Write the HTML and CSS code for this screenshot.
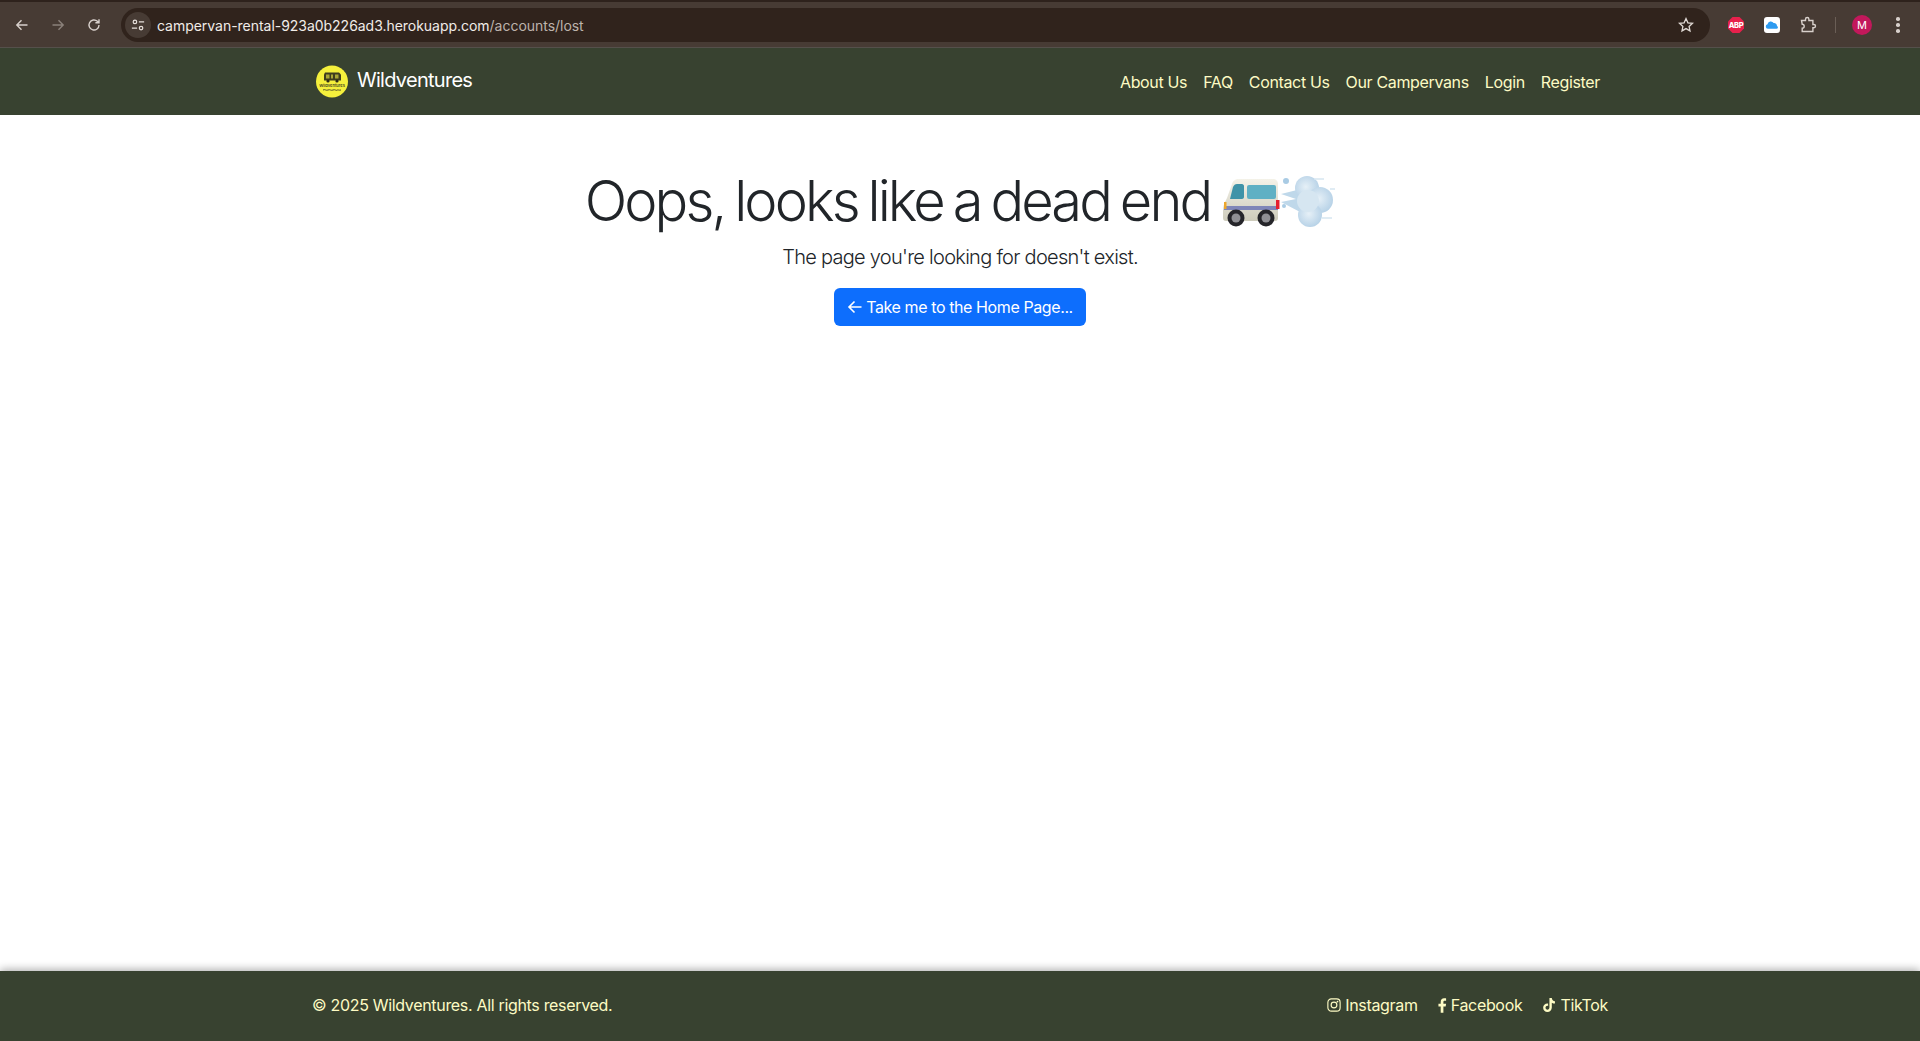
FILE: index.html
```html
<!DOCTYPE html>
<html lang="en">
<head>
    <meta charset="UTF-8">
    <meta name="viewport" content="width=device-width, initial-scale=1.0">
    <title>Wildventures - Page not found</title>
    <link rel="stylesheet" href="styles.css">
</head>
<body>
    <!-- browser chrome -->
    <div class="browser-bar">
        <div class="nav-icons">
            <svg class="tool-icon" viewBox="0 0 16 16"><path d="M13.5 8H3M7.5 3.2 2.800 8l4.700 4.800"/></svg>
            <svg class="tool-icon dim" viewBox="0 0 16 16"><path d="M2.500 8H13M8.500 3.200 13.200 8l-4.700 4.800"/></svg>
            <svg class="tool-icon" viewBox="0 0 16 16"><path d="M13 8a5 5 0 1 1-1.600-3.700L13 5.800M13 2.200v3.600H9.400"/></svg>
        </div>
        <div class="omnibox">
            <span class="site-info">
                <svg viewBox="0 0 16 16"><circle cx="4.500" cy="4.500" r="2"/><path d="M9 4.500h6M1 11.500h6"/><circle cx="11.500" cy="11.500" r="2"/></svg>
            </span>
            <span class="url">campervan-rental-923a0b226ad3.herokuapp.com<span class="url-path">/accounts/lost</span></span>
            <svg class="star" viewBox="0 0 16 16"><path d="m8 1.600 1.900 4.200 4.600.5-3.400 3.100.9 4.500-4-2.300-4 2.300.9-4.500L1.500 6.300l4.600-.5z"/></svg>
        </div>
        <div class="ext-icons">
            <svg class="ext" viewBox="0 0 18 18"><path class="abp-shape" d="M5.500 1h7L17 5.500v7L12.500 17h-7L1 12.500v-7z"/><text x="9" y="11.800" class="abp-text">ABP</text></svg>
            <svg class="ext" viewBox="0 0 18 18"><rect x="1" y="1" width="16" height="16" rx="3" class="cloud-bg"/><path class="cloud" d="M4.800 12.800a2.300 2.300 0 0 1-.3-4.500 3.300 3.300 0 0 1 6.100-1.300 2.900 2.900 0 0 1 3.400 2.900 1.500 1.500 0 0 1-.5 2.900z"/></svg>
            <svg class="tool-icon puzzle" viewBox="0 0 18 18"><path d="M2.500 4.500h4V3.200a1.700 1.700 0 0 1 3.400 0v1.300h4v4h1a1.600 1.600 0 0 1 0 3.200h-1v3.800H3.200v-3.300a2 2 0 0 0 0-4z"/></svg>
            <span class="divider"></span>
            <span class="avatar">M</span>
            <span class="kebab"><i></i><i></i><i></i></span>
        </div>
    </div>

    <nav class="navbar">
        <div class="container nav-inner">
            <a class="brand" href="#">
                <svg class="logo" viewBox="0 0 32 32">
                    <circle cx="16" cy="16" r="16" fill="#f5f03c"/>
                    <path d="M8 15V9l1-2h14l2 2v6z" fill="#3f3d1e"/>
                    <rect x="10" y="9" width="3.500" height="4" fill="#a9a635"/>
                    <rect x="15" y="9" width="2" height="4" fill="#a9a635"/>
                    <rect x="19" y="9" width="3.500" height="4" fill="#a9a635"/>
                    <circle cx="12" cy="15.500" r="1.600" fill="#2c2b16"/>
                    <circle cx="21" cy="15.500" r="1.600" fill="#2c2b16"/>
                    <text x="16" y="21" class="logo-text">Wildventures</text>
                    <path d="M7 24.500c2-1.200 3 1 5 0s3 1 5 0 3 1 4 .2 2 .4 4-.2" fill="none" stroke="#55532a" stroke-width="1"/>
                </svg>
                <span>Wildventures</span>
            </a>
            <ul class="nav-links">
                <li><a href="#">About Us</a></li>
                <li><a href="#">FAQ</a></li>
                <li><a href="#">Contact Us</a></li>
                <li><a href="#">Our Campervans</a></li>
                <li><a href="#">Login</a></li>
                <li><a href="#">Register</a></li>
            </ul>
        </div>
    </nav>

    <main class="content">
        <h1 class="lost-title">Oops, looks like a dead end
            <svg class="emoji" viewBox="0 0 113 56">
                <defs>
                    <radialGradient id="puff" cx="45%" cy="45%" r="60%">
                        <stop offset="0" stop-color="#e6f0f7"/>
                        <stop offset="1" stop-color="#b4d0e6"/>
                    </radialGradient>
                    <linearGradient id="body" x1="0" y1="0" x2="0" y2="1">
                        <stop offset="0" stop-color="#f4f2e8"/>
                        <stop offset="1" stop-color="#cdcbbb"/>
                    </linearGradient>
                </defs>
                <!-- van -->
                <path d="M1 38c0-7 2-10 4-14l5-14c1-3 3-5 7-5h34c3 0 5 2 5 5v34c0 2-1 3-3 3H4c-2 0-3-1-3-3z" fill="url(#body)"/>
                <path d="M2 32h54v4H2z" fill="#7f86b8"/>
                <path d="M11 13c1-2 2-3 4-3h5c1 0 2 1 2 2v11c0 1-1 2-2 2H8z" fill="#3f93a8"/>
                <rect x="25" y="11" width="29" height="14" rx="2" fill="#5fb0c4"/>
                <rect x="54" y="26" width="3.500" height="9" fill="#e5202e"/>
                <rect x="2" y="28" width="2.500" height="7" fill="#eda72c"/>
                <circle cx="14" cy="44" r="8.500" fill="#25252a"/><circle cx="14" cy="44" r="4.500" fill="#8f8f94"/>
                <circle cx="44" cy="44" r="8.500" fill="#25252a"/><circle cx="44" cy="44" r="4.500" fill="#8f8f94"/>
                <!-- dash -->
                <circle cx="64" cy="7" r="3" fill="#a9cbe4"/>
                <circle cx="62" cy="32" r="2" fill="#a9cbe4"/>
                <path d="M59 20l20-5 6 10-5 14-21-11 15-3z" fill="#bfd8ea"/>
                <circle cx="85" cy="14" r="12" fill="url(#puff)"/>
                <circle cx="98" cy="26" r="13" fill="url(#puff)"/>
                <circle cx="88" cy="41" r="12" fill="url(#puff)"/>
                <circle cx="86" cy="27" r="11" fill="#d6e6f1"/>
                <path d="M92 5h10M108 15h5M100 44h10" stroke="#d6e6f1" stroke-width="1.500"/>
            </svg>
        </h1>
        <p class="lost-text">The page you're looking for doesn't exist.</p>
        <a class="btn-home" href="#">
            <svg viewBox="0 0 16 16"><path d="M14.500 8H2M7.500 2.500 2 8l5.500 5.500"/></svg>
            Take me to the Home Page...
        </a>
    </main>

    <footer class="footer">
        <div class="container footer-inner">
            <p>&copy; 2025 Wildventures. All rights reserved.</p>
            <div class="social">
                <a href="#">
                    <svg class="social-icon" viewBox="0 0 16 16"><rect x="1" y="1" width="14" height="14" rx="4" class="ig-line"/><circle cx="8" cy="8" r="3.300" class="ig-line"/><circle cx="12" cy="4" r="1"/></svg>
                    Instagram
                </a>
                <a href="#">
                    <svg class="social-icon fb" viewBox="0 0 10 16"><path d="M3 16V9H.500V6H3V4c0-2.500 1.500-4 3.700-4 1 0 2 .1 2.300.2v2.600H7.500C6.200 2.800 6 3.500 6 4.300V6h3l-.5 3H6v7z"/></svg>
                    Facebook
                </a>
                <a href="#">
                    <svg class="social-icon" viewBox="0 0 16 16"><path d="M8.500 0h2.700c.2 2.100 1.500 3.500 3.600 3.700v2.700c-1.300 0-2.500-.4-3.600-1.100v5.600c0 3-2.200 5.100-5 5.100-2.700 0-4.900-2.200-4.900-4.900 0-3 2.700-5.300 5.700-4.800v2.800c-1.500-.5-3 .6-3 2 0 1.200 1 2.200 2.200 2.200 1.300 0 2.300-1 2.300-2.400z"/></svg>
                    TikTok
                </a>
            </div>
        </div>
    </footer>
</body>
</html>
```

FILE: styles.css
```css
* {
    box-sizing: border-box;
}

body {
    margin: 0;
    min-height: 1041px;
    display: flex;
    flex-direction: column;
    font-family: Inter, "Liberation Sans", sans-serif;
    background-color: #fff;
    color: #212529;
}

a {
    color: inherit;
    text-decoration: none;
}

/* browser chrome */
.browser-bar {
    height: 48px;
    flex-shrink: 0;
    display: flex;
    align-items: center;
    padding-top: 2px;
    background-color: #473b34;
    box-shadow: inset 0 2px 0 #2e221c, inset 0 -1px 0 #55504b;
}

.nav-icons {
    display: flex;
    gap: 20px;
    padding-left: 14px;
    width: 121px;
}

.tool-icon {
    width: 16px;
    height: 16px;
    fill: none;
    stroke: #d8d0cb;
    stroke-width: 1.400;
}

.tool-icon.dim {
    stroke: #8b817a;
}

.omnibox {
    width: 1589px;
    height: 34px;
    display: flex;
    align-items: center;
    background-color: #30231c;
    border-radius: 17px;
    padding: 0 4px;
    color: #f1ece8;
}

.site-info {
    width: 26px;
    height: 26px;
    border-radius: 50%;
    background-color: #473b34;
    display: flex;
    align-items: center;
    justify-content: center;
}

.site-info svg {
    width: 14px;
    height: 14px;
    fill: none;
    stroke: #e6dfda;
    stroke-width: 1.400;
}

.url {
    margin-left: 6px;
    flex: 1;
    font-size: 14px;
    letter-spacing: -0.03px;
}

.url-path {
    color: #bdb3ac;
}

.star {
    width: 16px;
    height: 16px;
    margin-right: 12px;
    fill: none;
    stroke: #e0d9d4;
    stroke-width: 1.300;
}

.ext-icons {
    display: flex;
    align-items: center;
    margin-left: 17px;
}

.ext {
    width: 18px;
    height: 18px;
    margin-right: 18px;
}

.abp-shape {
    fill: #e8204c;
}

.abp-text {
    fill: #fff;
    font-size: 7.500px;
    font-weight: 800;
    letter-spacing: -0.3px;
    text-anchor: middle;
}

.cloud-bg {
    fill: #fff;
}

.cloud {
    fill: #2e9bf0;
}

.puzzle {
    width: 18px;
    height: 18px;
}

.divider {
    width: 1px;
    height: 16px;
    background-color: #6a5e56;
    margin: 0 16px 0 18px;
}

.avatar {
    width: 20px;
    height: 20px;
    border-radius: 50%;
    background-color: #c2185b;
    color: #fff;
    font-size: 11px;
    display: flex;
    align-items: center;
    justify-content: center;
}

.kebab {
    margin-left: 24px;
    display: flex;
    flex-direction: column;
    gap: 2.500px;
}

.kebab i {
    width: 3.500px;
    height: 3.500px;
    border-radius: 50%;
    background-color: #d8d0cb;
}

/* page */
.container {
    width: 1320px;
    margin: 0 auto;
    padding: 0 12px;
}

.navbar {
    height: 67px;
    flex-shrink: 0;
    display: flex;
    align-items: center;
    background-color: #384230;
}

.nav-inner {
    display: flex;
    align-items: center;
    justify-content: space-between;
}

.brand {
    display: flex;
    align-items: center;
    gap: 9px;
    margin-left: 4px;
    color: #fff;
    font-size: 20px;
    letter-spacing: -0.72px;
}

.brand span {
    margin-bottom: 3px;
}

.logo {
    width: 32px;
    height: 33px;
}

.logo-text {
    font-size: 4px;
    font-weight: 600;
    letter-spacing: 0;
    fill: #3f3d1e;
    text-anchor: middle;
}

.nav-links {
    display: flex;
    gap: 16px;
    list-style: none;
    margin: 0 8px 0 0;
    padding: 0;
    font-size: 16px;
    letter-spacing: -0.35px;
    color: #fdfbc4;
}

.content {
    flex: 1;
    display: flex;
    flex-direction: column;
    align-items: center;
    padding-top: 53px;
}

.lost-title {
    margin: 0;
    font-size: 56px;
    line-height: 1.200;
    font-weight: 300;
    letter-spacing: -2.900px;
    word-spacing: -3px;
    display: flex;
    align-items: center;
    gap: 12px;
}

.emoji {
    width: 113px;
    height: 56px;
}

.lost-text {
    margin: 7px 0 0;
    font-size: 20px;
    font-weight: 300;
    line-height: 30px;
    letter-spacing: -0.72px;
}

.btn-home {
    margin-top: 16px;
    height: 38px;
    padding: 0 13px;
    display: flex;
    align-items: center;
    gap: 3px;
    font-size: 16px;
    letter-spacing: -0.4px;
    color: #fff;
    background-color: #0d6efd;
    border-radius: 6px;
}

.btn-home svg {
    width: 16px;
    height: 16px;
    fill: none;
    stroke: #fff;
    stroke-width: 1.600;
}

.footer {
    height: 70px;
    padding-bottom: 2px;
    flex-shrink: 0;
    display: flex;
    align-items: center;
    background-color: #384230;
    color: #fdfbc4;
    font-size: 16px;
    letter-spacing: -0.32px;
    box-shadow: 0 -2px 8px rgba(0, 0, 0, 0.3);
}

.footer p {
    margin: 0;
}

.footer-inner {
    display: flex;
    align-items: center;
    justify-content: space-between;
}

.social {
    display: flex;
    gap: 20px;
}

.social a {
    display: flex;
    align-items: center;
    gap: 4px;
}

.social-icon {
    width: 14px;
    height: 14px;
    fill: #fdfbc4;
}

.social-icon.fb {
    width: 9px;
    height: 15px;
}

.ig-line {
    fill: none;
    stroke: #fdfbc4;
    stroke-width: 1.300;
}
```
